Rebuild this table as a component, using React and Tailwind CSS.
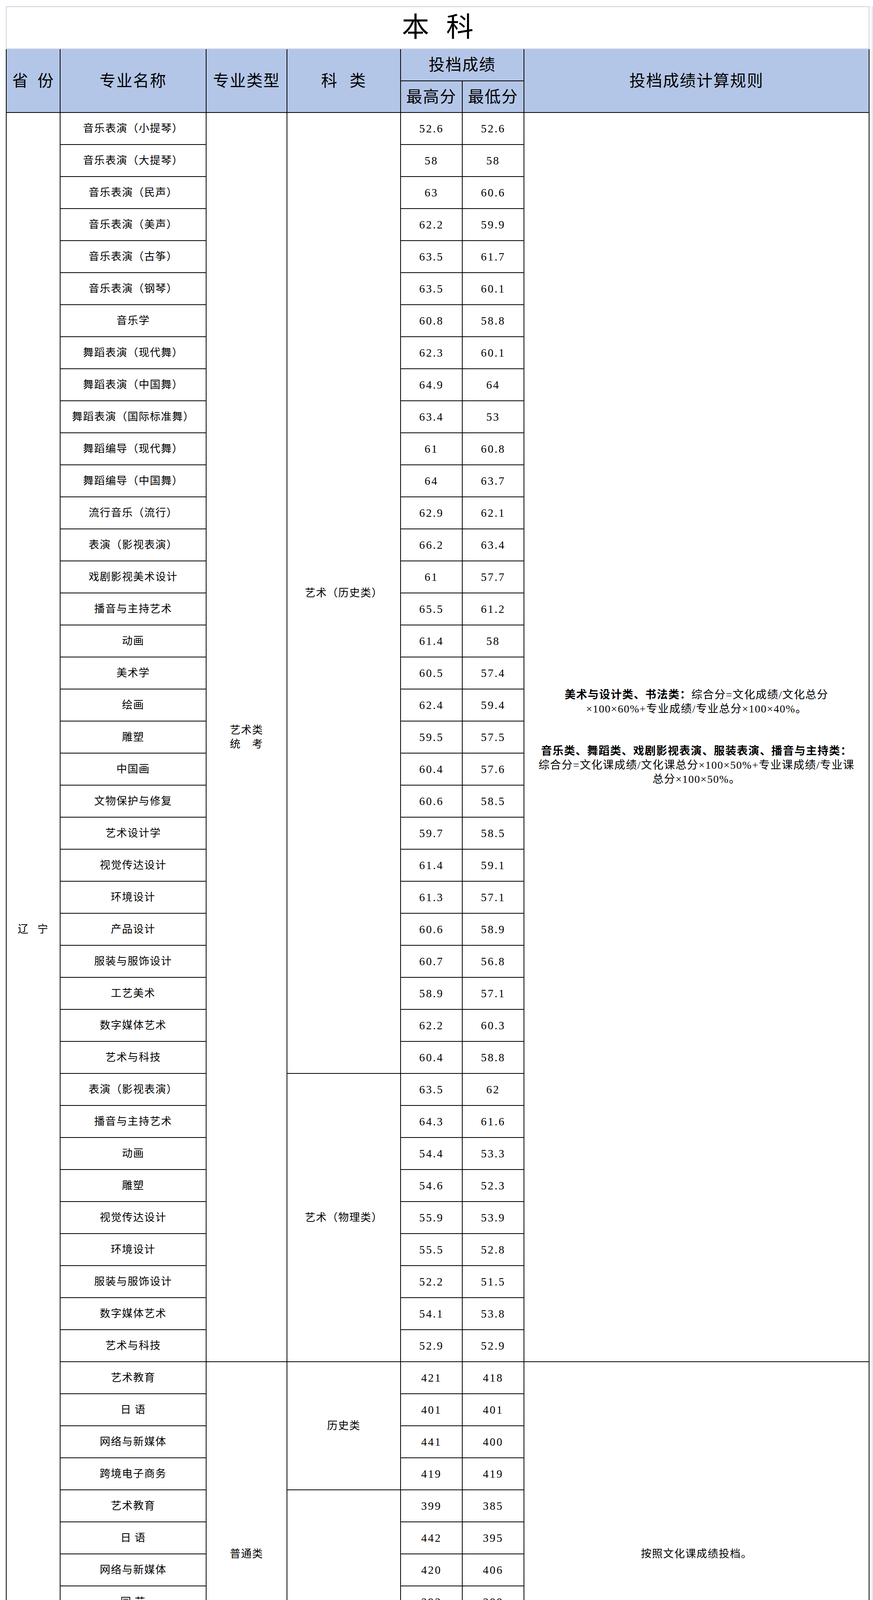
import React from 'react';

const bkRows = [
  ['音乐表演（小提琴）', '52.6', '52.6'],
  ['音乐表演（大提琴）', '58', '58'],
  ['音乐表演（民声）', '63', '60.6'],
  ['音乐表演（美声）', '62.2', '59.9'],
  ['音乐表演（古筝）', '63.5', '61.7'],
  ['音乐表演（钢琴）', '63.5', '60.1'],
  ['音乐学', '60.8', '58.8'],
  ['舞蹈表演（现代舞）', '62.3', '60.1'],
  ['舞蹈表演（中国舞）', '64.9', '64'],
  ['舞蹈表演（国际标准舞）', '63.4', '53'],
  ['舞蹈编导（现代舞）', '61', '60.8'],
  ['舞蹈编导（中国舞）', '64', '63.7'],
  ['流行音乐（流行）', '62.9', '62.1'],
  ['表演（影视表演）', '66.2', '63.4'],
  ['戏剧影视美术设计', '61', '57.7'],
  ['播音与主持艺术', '65.5', '61.2'],
  ['动画', '61.4', '58'],
  ['美术学', '60.5', '57.4'],
  ['绘画', '62.4', '59.4'],
  ['雕塑', '59.5', '57.5'],
  ['中国画', '60.4', '57.6'],
  ['文物保护与修复', '60.6', '58.5'],
  ['艺术设计学', '59.7', '58.5'],
  ['视觉传达设计', '61.4', '59.1'],
  ['环境设计', '61.3', '57.1'],
  ['产品设计', '60.6', '58.9'],
  ['服装与服饰设计', '60.7', '56.8'],
  ['工艺美术', '58.9', '57.1'],
  ['数字媒体艺术', '62.2', '60.3'],
  ['艺术与科技', '60.4', '58.8'],
  ['表演（影视表演）', '63.5', '62'],
  ['播音与主持艺术', '64.3', '61.6'],
  ['动画', '54.4', '53.3'],
  ['雕塑', '54.6', '52.3'],
  ['视觉传达设计', '55.9', '53.9'],
  ['环境设计', '55.5', '52.8'],
  ['服装与服饰设计', '52.2', '51.5'],
  ['数字媒体艺术', '54.1', '53.8'],
  ['艺术与科技', '52.9', '52.9'],
  ['艺术教育', '421', '418'],
  ['日 语', '401', '401'],
  ['网络与新媒体', '441', '400'],
  ['跨境电子商务', '419', '419'],
  ['艺术教育', '399', '385'],
  ['日 语', '442', '395'],
  ['网络与新媒体', '420', '406'],
  ['园 艺', '393', '388'],
  ['文化产业管理', '415', '389'],
  ['电子商务', '406', '396'],
  ['跨境电子商务', '405', '392'],
  ['旅游管理', '447', '392'],
];

const zkRows = [
  ['视觉传达设计', '56.9', '56.5'],
  ['服装与服饰设计', '57.4', '55.4'],
  ['环境艺术设计', '56.4', '56.2'],
  ['书画艺术', '57.3', '53.8'],
  ['工艺美术品设计', '56.5', '55'],
  ['广告艺术设计', '56.5', '56'],
  ['室内艺术设计', '56.2', '55.6'],
  ['人物形象设计', '56.9', '53.8'],
  ['雕刻艺术设计', '56.5', '53.6'],
  ['戏剧影视表演', '60.9', '58.4'],
  ['播音与主持', '59.8', '57'],
  ['影视动画', '57.1', '55'],
  ['舞蹈表演（中国舞）', '62.9', '61.1'],
  ['舞蹈表演（现代舞）', '59.9', '57.3'],
  ['音乐表演（钢琴）', '57.6', '57.4'],
  ['音乐表演（古筝）', '60.9', '60.8'],
  ['音乐表演（美声）', '59.2', '57'],
  ['音乐表演（民声）', '60', '59.1'],
  ['旅游管理', '343', '195'],
  ['应用韩语', '285', '255'],
  ['旅游管理', '347', '191'],
  ['应用韩语', '337', '216'],
];

const Line = ({ children }) => (
  <div className="whitespace-nowrap h-[36px]">{children}</div>
);

const ArtType = () => (
  <div className="leading-[36px]">
    <div>艺术类</div>
    <div>统　考</div>
  </div>
);

const bkRules1 = (
  <div className="text-[28px] tracking-[1.5px] leading-[36px]">
    <Line>
      <b className="font-bold">美术与设计类、书法类：</b>综合分=文化成绩/文化总分
    </Line>
    <Line>×100×60%+专业成绩/专业总分×100×40%。</Line>
    <Line />
    <Line />
    <Line>
      <b className="font-bold">音乐类、舞蹈类、戏剧影视表演、服装表演、播音与主持类：</b>
    </Line>
    <Line>综合分=文化课成绩/文化课总分×100×50%+专业课成绩/专业课</Line>
    <Line>总分×100×50%。</Line>
  </div>
);

const zkRules1 = (
  <div className="text-[28px] tracking-[1.5px] leading-[36px]">
    <Line>
      <b className="font-bold">美术与设计类：</b>综合分=文化成绩/文化总分×100×60%+专业成
    </Line>
    <Line>绩/专业总分×100×40%。</Line>
    <Line />
    <Line />
    <Line>
      <b className="font-bold">音乐类、舞蹈类：</b>综合分=文化课成绩/文化课总分×100×50%+
    </Line>
    <Line>专业课成绩/专业课总分×100×50%。</Line>
  </div>
);

const plainRule = <div className="whitespace-nowrap">按照文化课成绩投档。</div>;

const sections = [
  {
    title: '本 科',
    titleH: 'h-[108px]',
    headTop: 'h-[82px]',
    headBot: 'h-[81px]',
    rows: bkRows,
    types: [
      { span: 39, content: <ArtType /> },
      { span: 12, content: '普通类' },
    ],
    kinds: [
      { span: 30, content: '艺术（历史类）' },
      { span: 9, content: '艺术（物理类）' },
      { span: 4, content: '历史类' },
      { span: 8, content: '物理类' },
    ],
    rules: [
      { span: 39, content: bkRules1 },
      { span: 12, content: plainRule },
    ],
  },
  {
    title: '专 科',
    titleH: 'h-[132px]',
    headTop: 'h-[92px]',
    headBot: 'h-[93px]',
    rows: zkRows,
    types: [
      { span: 18, content: <ArtType /> },
      { span: 4, content: '普通类' },
    ],
    kinds: [
      { span: 18, content: '艺术(历史类)' },
      { span: 2, content: '历史类' },
      { span: 2, content: '物理类' },
    ],
    rules: [
      { span: 18, content: zkRules1 },
      { span: 4, content: plainRule },
    ],
  },
];

const groupStarts = (groups) => {
  const map = {};
  let i = 0;
  groups.forEach((g) => {
    map[i] = g;
    i += g.span;
  });
  return map;
};

const cell = 'border-2 border-black text-center align-middle p-0 leading-[36px]';
const head = 'border-2 border-black bg-[#b4c6e7] text-center align-middle p-0 text-[41px] leading-[48px] tracking-[2px] font-normal text-black';
const txt = 'text-[27px] tracking-[1.5px]';
const num = 'text-[29px] tracking-[3px]';

function Section({ s }) {
  const typeMap = groupStarts(s.types);
  const kindMap = groupStarts(s.kinds);
  const ruleMap = groupStarts(s.rules);
  return (
    <>
      <tr className={s.titleH}>
        <td
          colSpan={7}
          className="border-2 border-[#cbd2e2] text-center align-middle p-0 text-[70px] leading-none text-black [word-spacing:26px]"
        >
          {s.title}
        </td>
      </tr>
      <tr className={s.headTop}>
        <th rowSpan={2} className={head + ' [word-spacing:10px]'}>省 份</th>
        <th rowSpan={2} className={head}>专业名称</th>
        <th rowSpan={2} className={head}>专业类型</th>
        <th rowSpan={2} className={head + ' [word-spacing:18px]'}>科 类</th>
        <th colSpan={2} className={head}>投档成绩</th>
        <th rowSpan={2} className={head}>投档成绩计算规则</th>
      </tr>
      <tr className={s.headBot}>
        <th className={head + ' tracking-[0px]'}>最高分</th>
        <th className={head + ' tracking-[0px]'}>最低分</th>
      </tr>
      {s.rows.map((r, i) => (
        <tr key={i} className="h-[82px]">
          {i === 0 && (
            <td rowSpan={s.rows.length} className={cell + ' ' + txt + ' [word-spacing:14px]'}>
              辽 宁
            </td>
          )}
          <td className={cell + ' ' + txt}>{r[0]}</td>
          {typeMap[i] && (
            <td rowSpan={typeMap[i].span} className={cell + ' ' + txt}>
              {typeMap[i].content}
            </td>
          )}
          {kindMap[i] && (
            <td rowSpan={kindMap[i].span} className={cell + ' ' + txt}>
              {kindMap[i].content}
            </td>
          )}
          <td className={cell + ' ' + num}>{r[1]}</td>
          <td className={cell + ' ' + num}>{r[2]}</td>
          {ruleMap[i] && (
            <td rowSpan={ruleMap[i].span} className={cell + ' ' + txt}>
              {ruleMap[i].content}
            </td>
          )}
        </tr>
      ))}
    </>
  );
}

export default function App() {
  return (
    <div className="w-[2236px] h-[6606px] overflow-hidden bg-white text-black font-['Liberation_Serif','Noto_Sans_CJK_SC',serif]">
      <div className="flex pt-[16px] pl-[15px]">
        <table className="border-collapse table-fixed w-[2210px]">
          <colgroup>
            <col className="w-[138px]" />
            <col className="w-[374px]" />
            <col className="w-[207px]" />
            <col className="w-[291px]" />
            <col className="w-[158px]" />
            <col className="w-[158px]" />
            <col className="w-[884px]" />
          </colgroup>
          <tbody>
            {sections.map((s, i) => (
              <Section key={i} s={s} />
            ))}
          </tbody>
        </table>
        <div className="ml-[6px] w-[2px] bg-[#d6dce8] self-stretch" />
      </div>
    </div>
  );
}
